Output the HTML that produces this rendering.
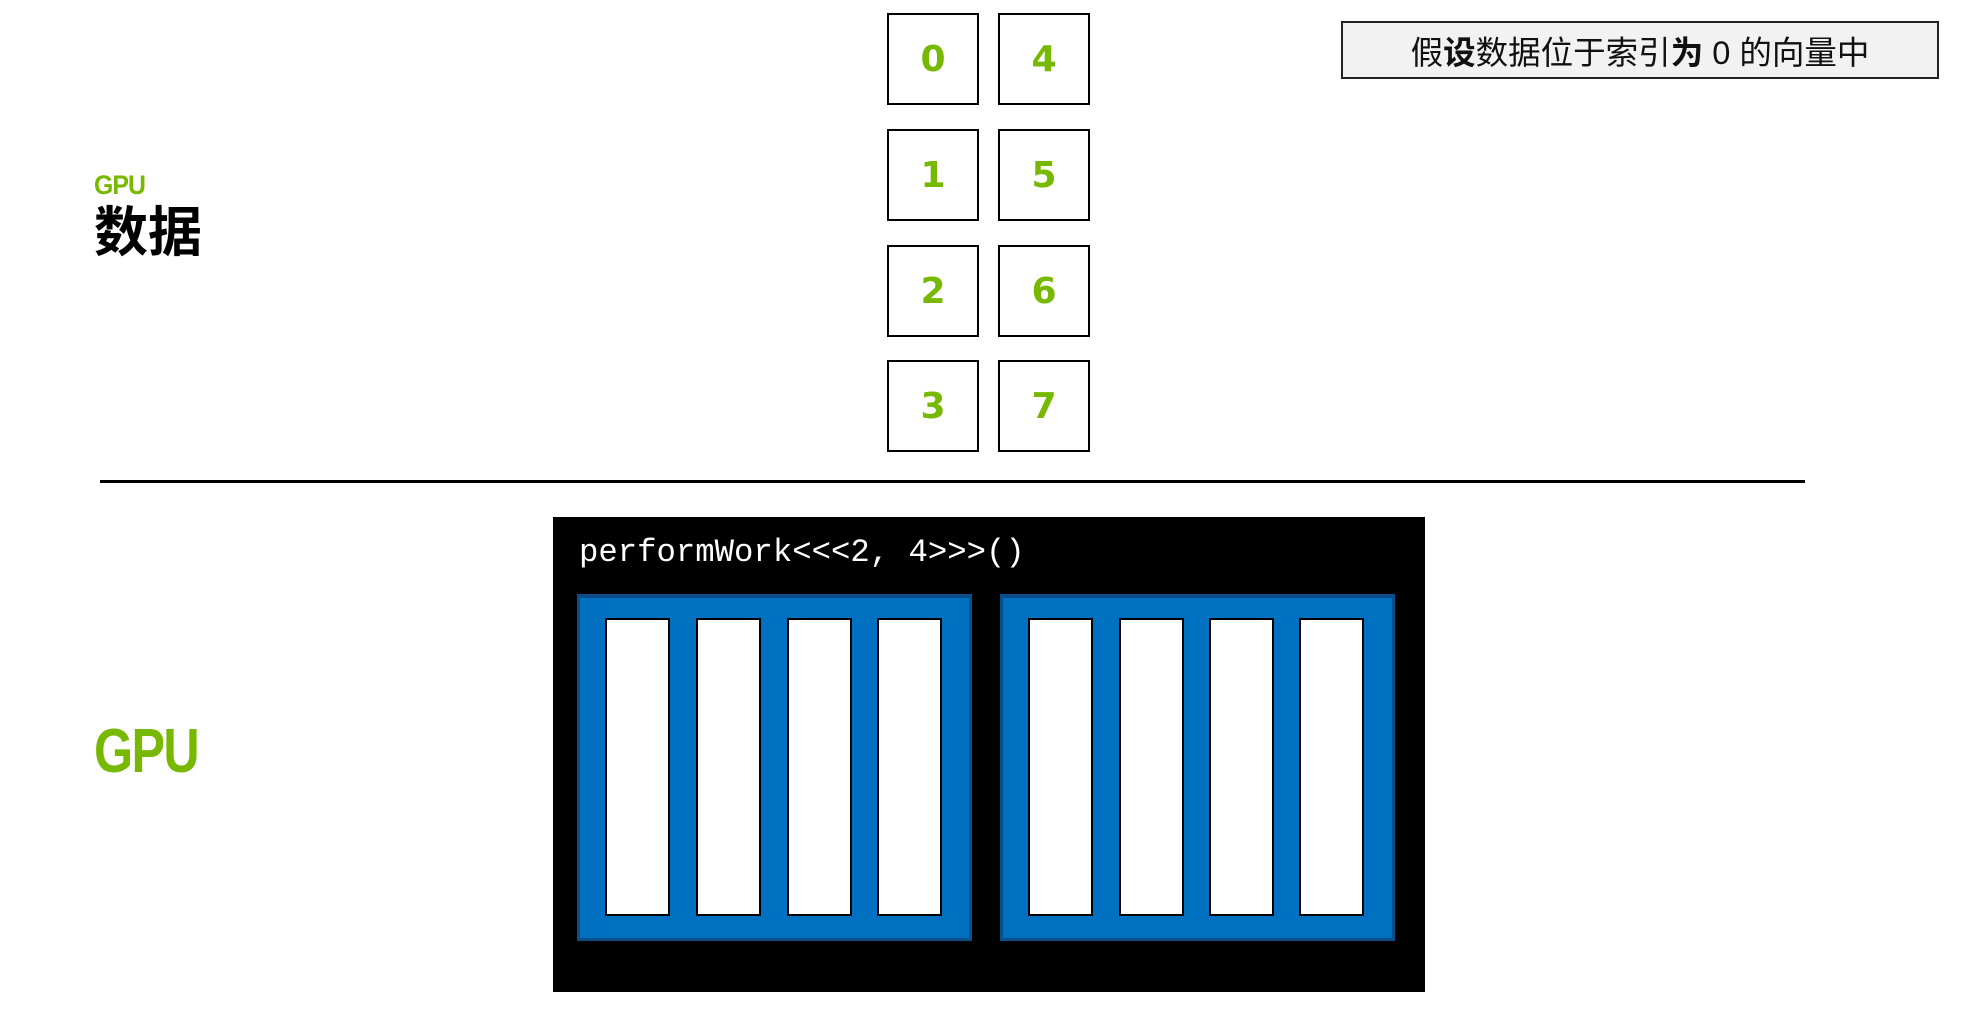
<!DOCTYPE html>
<html><head><meta charset="utf-8"><style>
html,body{margin:0;padding:0;background:#fff;}
body{width:1975px;height:1026px;position:relative;overflow:hidden;font-family:"Liberation Sans","Noto Sans CJK SC",sans-serif;}
.b{position:absolute;width:88px;height:88px;border:2px solid #000;color:#76b900;font:bold 36px "DejaVu Sans",sans-serif;display:flex;align-items:center;justify-content:center;box-sizing:content-box;}
.blk{position:absolute;top:594px;width:395px;height:347px;background:#0070c0;border:3px solid #0a4e8a;border-top-width:4px;box-sizing:border-box;}
.w{position:absolute;top:618px;width:65px;height:298px;background:#fff;border:2px solid #000;box-sizing:border-box;}
</style></head><body>
<div class="b" style="left:887px;top:13px">0</div>
<div class="b" style="left:998px;top:13px">4</div>
<div class="b" style="left:887px;top:129px">1</div>
<div class="b" style="left:998px;top:129px">5</div>
<div class="b" style="left:887px;top:245px">2</div>
<div class="b" style="left:998px;top:245px">6</div>
<div class="b" style="left:887px;top:360px">3</div>
<div class="b" style="left:998px;top:360px">7</div>

<div style="position:absolute;left:1341px;top:21px;width:598px;height:58px;box-sizing:border-box;border:2px solid #222;background:#f2f2f2;display:flex;align-items:center;justify-content:center;font-size:32.5px;color:#111;">假<b>设</b>数据位于索引<b>为</b>&nbsp;0&nbsp;的向量中</div>

<div style="position:absolute;left:94px;top:170px;font-weight:bold;font-size:27px;color:#76b900;letter-spacing:-1px;transform:scaleX(0.92);transform-origin:left;">GPU</div>
<div style="position:absolute;left:94px;top:188px;font-weight:bold;font-size:54px;color:#000;font-family:'Noto Sans CJK SC',sans-serif;">数据</div>

<div style="position:absolute;left:100px;top:480px;width:1705px;height:3px;background:#000;"></div>

<div style="position:absolute;left:94px;top:716px;font-weight:bold;font-size:62px;color:#76b900;letter-spacing:-2px;transform:scaleX(0.81);transform-origin:left;">GPU</div>

<div style="position:absolute;left:553px;top:517px;width:872px;height:475px;background:#000;"></div>
<div style="position:absolute;left:579px;top:534px;color:#fff;font:32.3px 'Liberation Mono',monospace;">performWork&lt;&lt;&lt;2, 4&gt;&gt;&gt;()</div>
<div class="blk" style="left:577px"></div>
<div class="blk" style="left:1000px"></div>
<div class="w" style="left:605px"></div>
<div class="w" style="left:696px"></div>
<div class="w" style="left:787px"></div>
<div class="w" style="left:877px"></div>
<div class="w" style="left:1028px"></div>
<div class="w" style="left:1119px"></div>
<div class="w" style="left:1209px"></div>
<div class="w" style="left:1299px"></div>
</body></html>
